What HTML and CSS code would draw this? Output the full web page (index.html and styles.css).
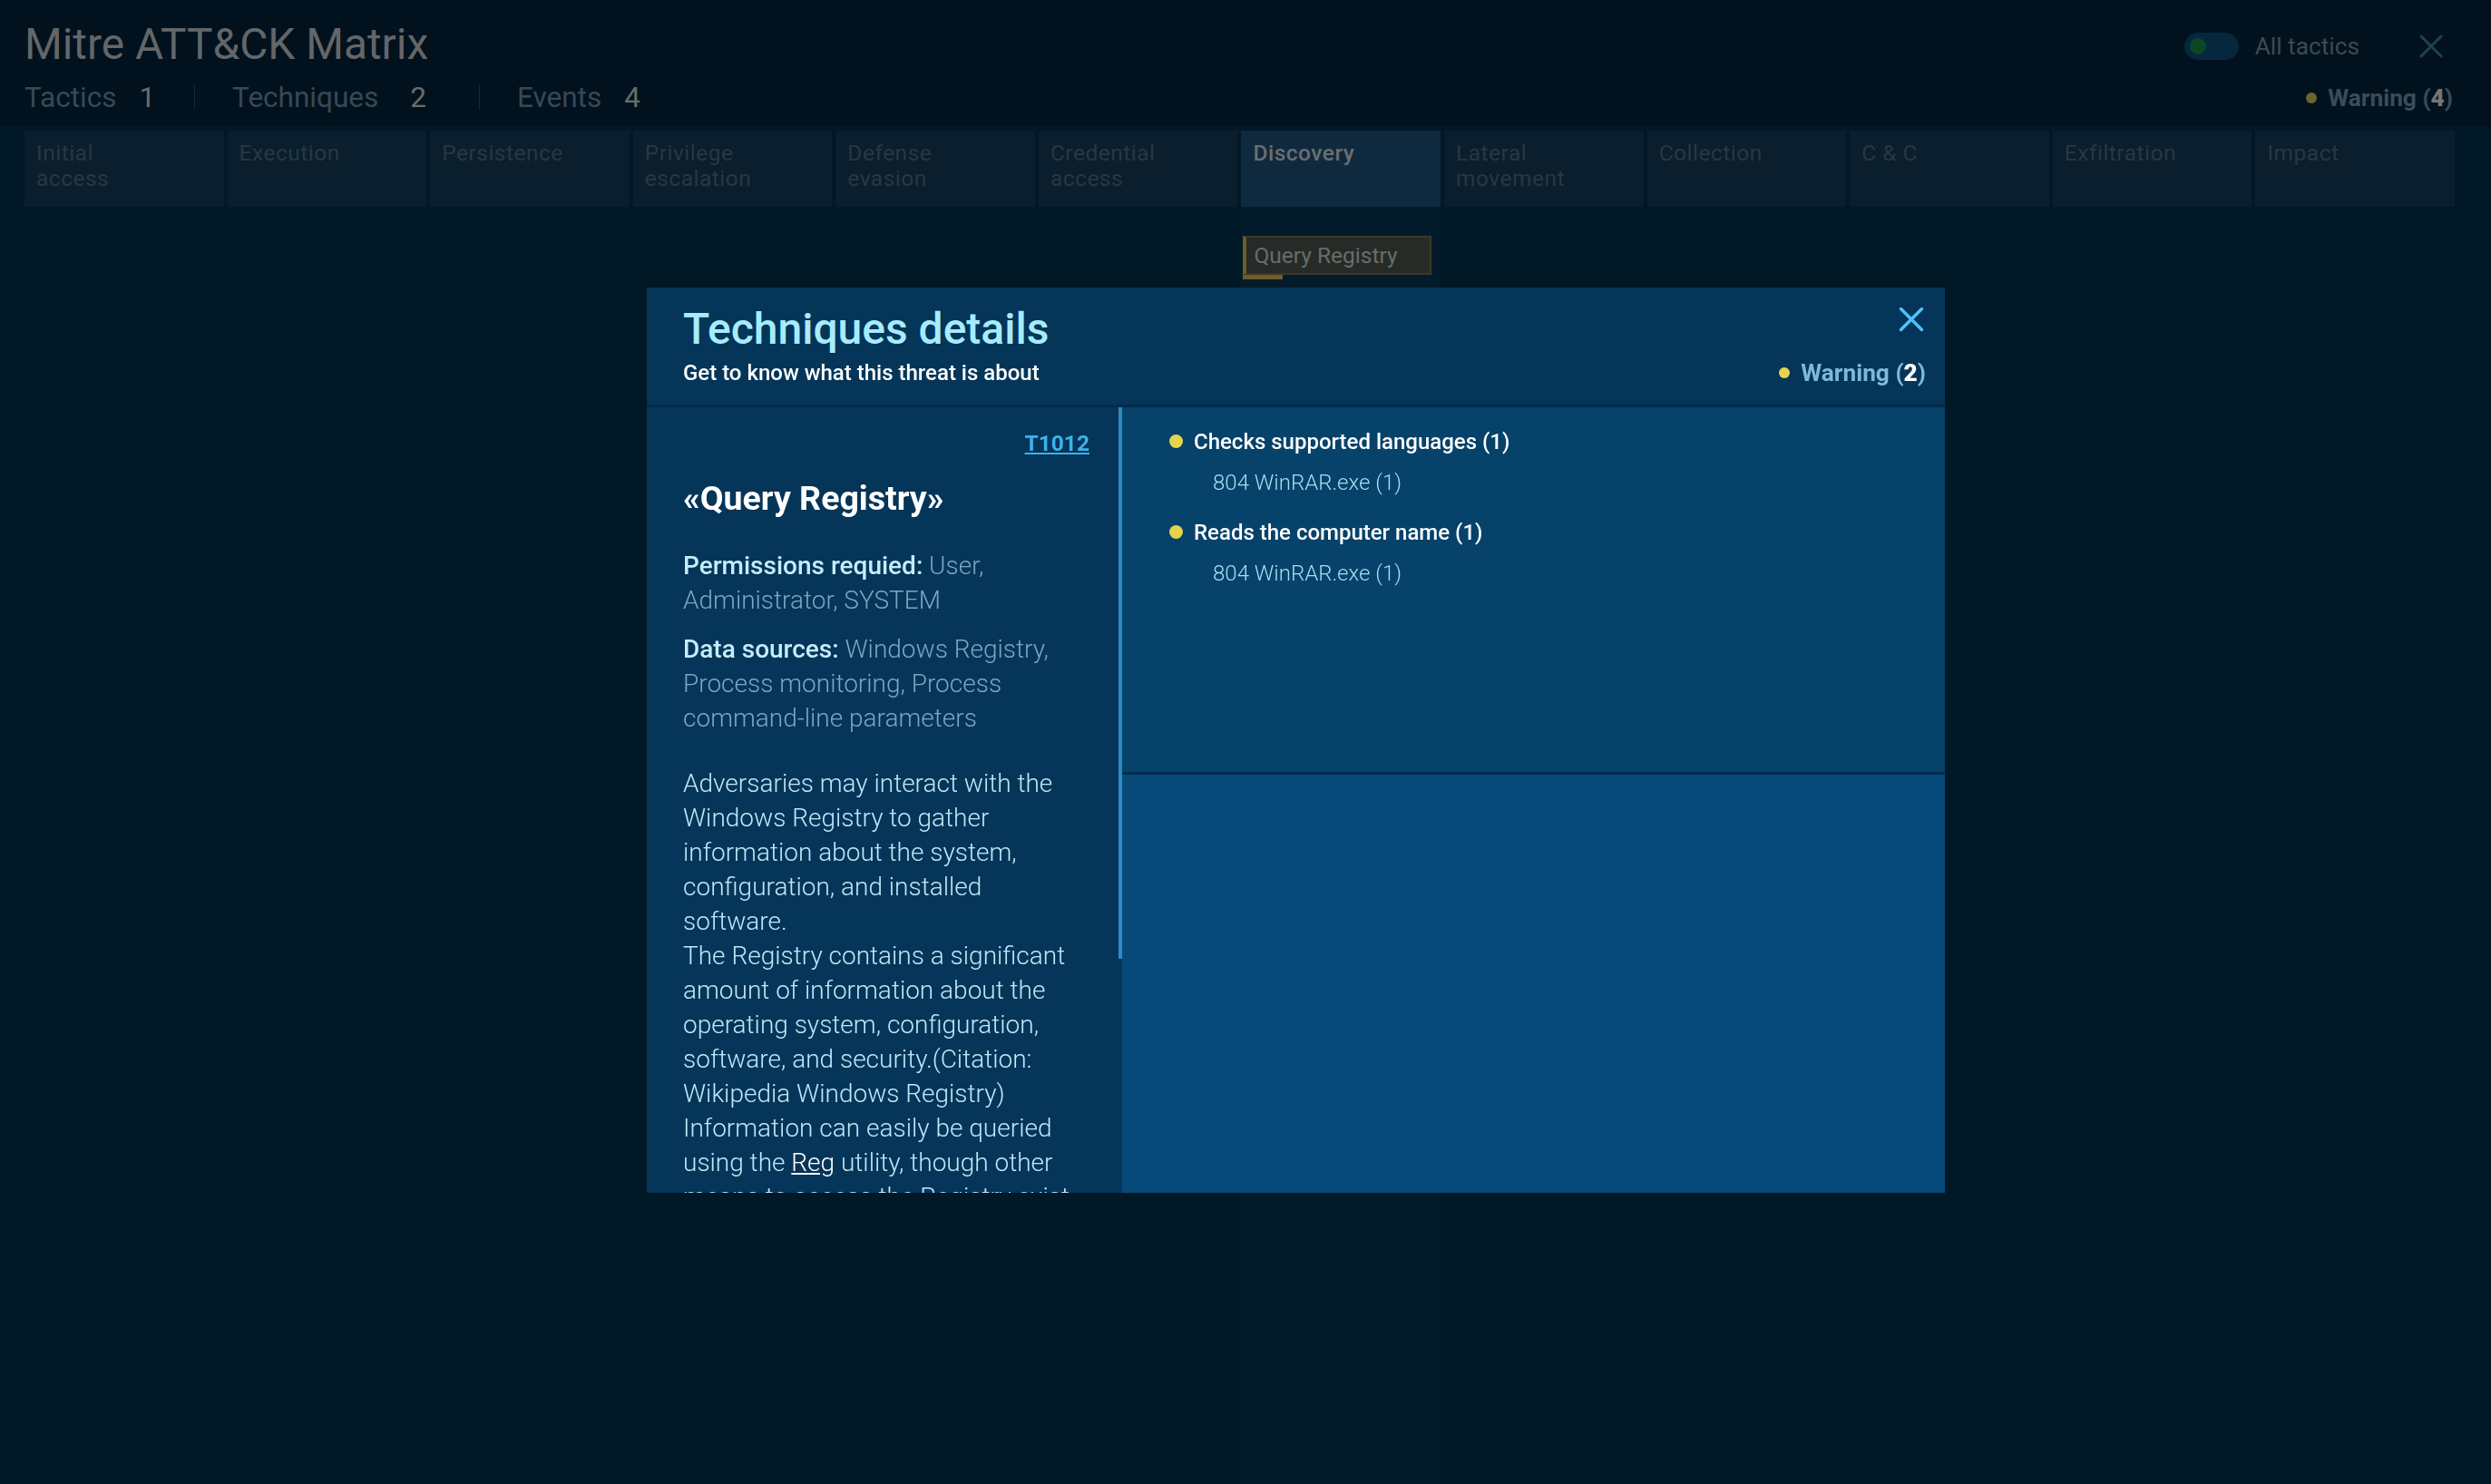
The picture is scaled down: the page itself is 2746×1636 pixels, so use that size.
FILE: index.html
```html
<!DOCTYPE html>
<html lang="en">
<head>
<meta charset="utf-8">
<title>Mitre ATT&amp;CK Matrix</title>
<link rel="stylesheet" href="styles.css">
</head>
<body>
<div class="page">
  <header class="top">
    <div class="top-row">
      <h1 class="title">Mitre ATT&amp;CK Matrix</h1>
      <div class="top-actions">
        <span class="toggle"><span class="knob"></span></span>
        <span class="toggle-label">All tactics</span>
        <svg class="close-icon" viewBox="0 0 26 26" aria-hidden="true"><path d="M2 2 L24 24 M24 2 L2 24"/></svg>
      </div>
    </div>
    <div class="stats-row">
      <div class="stats">
        <span class="stat-label">Tactics</span><span class="stat-num">1</span>
        <span class="sep"></span>
        <span class="stat-label">Techniques</span><span class="stat-num stat-num--wide">2</span>
        <span class="sep sep--wide"></span>
        <span class="stat-label">Events</span><span class="stat-num">4</span>
      </div>
      <div class="warn"><span class="dot"></span>Warning (<b>4</b>)</div>
    </div>
  </header>

  <main class="matrix">
    <section class="tactic"><div class="tactic-head">Initial<br>access</div><div class="tactic-body"></div></section>
    <section class="tactic"><div class="tactic-head">Execution</div><div class="tactic-body"></div></section>
    <section class="tactic"><div class="tactic-head">Persistence</div><div class="tactic-body"></div></section>
    <section class="tactic"><div class="tactic-head">Privilege<br>escalation</div><div class="tactic-body"></div></section>
    <section class="tactic"><div class="tactic-head">Defense<br>evasion</div><div class="tactic-body"></div></section>
    <section class="tactic"><div class="tactic-head">Credential<br>access</div><div class="tactic-body"></div></section>
    <section class="tactic active"><div class="tactic-head">Discovery</div><div class="tactic-body"><div class="chip">Query Registry</div></div></section>
    <section class="tactic"><div class="tactic-head">Lateral<br>movement</div><div class="tactic-body"></div></section>
    <section class="tactic"><div class="tactic-head">Collection</div><div class="tactic-body"></div></section>
    <section class="tactic"><div class="tactic-head">C &amp; C</div><div class="tactic-body"></div></section>
    <section class="tactic"><div class="tactic-head">Exfiltration</div><div class="tactic-body"></div></section>
    <section class="tactic"><div class="tactic-head">Impact</div><div class="tactic-body"></div></section>
  </main>
</div>

<div class="overlay">
  <div class="modal">
    <div class="modal-head">
      <div class="mh-row1">
        <h2 class="mh-title">Techniques details</h2>
        <svg class="mh-close" viewBox="0 0 28 28" aria-hidden="true"><path d="M2.5 2.5 L25.5 25.5 M25.5 2.5 L2.5 25.5"/></svg>
      </div>
      <div class="mh-row2">
        <div class="mh-sub">Get to know what this threat is about</div>
        <div class="mh-warn"><span class="dot"></span>Warning (<b>2</b>)</div>
      </div>
    </div>
    <div class="modal-body">
      <div class="detail">
        <div class="tech-id"><a href="#">T1012</a></div>
        <h3 class="tech-name">«Query Registry»</h3>
        <p class="meta"><span class="meta-label">Permissions requied:</span> User, Administrator, SYSTEM</p>
        <p class="meta"><span class="meta-label">Data sources:</span> Windows Registry, Process monitoring, Process command-line parameters</p>
        <p class="desc">Adversaries may interact with the Windows Registry to gather information about the system, configuration, and installed software.<br>The Registry contains a significant amount of information about the operating system, configuration, software, and security.(Citation: Wikipedia Windows Registry) Information can easily be queried using the <a href="#">Reg</a> utility, though other means to access the Registry exist. Some of the information may help adversaries to further their operation within a network. Adversaries may use the information from Query Registry during automated discovery to shape follow-on behaviors, including whether or not the adversary fully infects the target and/or attempts specific actions.</p>
        <div class="thumb"></div>
      </div>
      <div class="events">
        <div class="events-list">
          <div class="ev">
            <div class="ev-title"><span class="ev-dot"></span>Checks supported languages (1)</div>
            <div class="ev-sub">804 WinRAR.exe (1)</div>
          </div>
          <div class="ev">
            <div class="ev-title"><span class="ev-dot"></span>Reads the computer name (1)</div>
            <div class="ev-sub">804 WinRAR.exe (1)</div>
          </div>
        </div>
        <div class="events-detail"></div>
      </div>
    </div>
  </div>
</div>
</body>
</html>
```

FILE: styles.css
```css
html, body {
  margin: 0;
  padding: 0;
  height: 100%;
  overflow: hidden;
}
body {
  font-family: Roboto, "Noto Sans", "Liberation Sans", sans-serif;
  background: #011826;
}

.page {
  display: flex;
  flex-direction: column;
  height: 100vh;
}

/* ---------- top header ---------- */
.top {
  background: #01121e;
  padding: 21px 40px 12px 27px;
}
.top-row {
  display: flex;
  justify-content: space-between;
  align-items: center;
  height: 56px;
}
.title {
  margin: 0;
  font-size: 47.8px;
  font-weight: 400;
  line-height: 56px;
  color: #646668;
}
.top-actions {
  display: flex;
  align-items: center;
  padding-top: 4px;
}
.toggle {
  display: flex;
  align-items: center;
  width: 60px;
  height: 30px;
  border-radius: 15px;
  background: #05283f;
}
.knob {
  width: 18px;
  height: 18px;
  border-radius: 50%;
  background: #0d4625;
  margin-left: 6px;
}
.toggle-label {
  margin-left: 18px;
  font-size: 26.25px;
  line-height: 30px;
  color: #3e4953;
}
.close-icon {
  width: 26px;
  height: 26px;
  margin-left: 66px;
  margin-right: 13px;
  fill: none;
  stroke: #1d4256;
  stroke-width: 3;
  stroke-linecap: round;
}

.stats-row {
  display: flex;
  justify-content: space-between;
  align-items: center;
  margin-top: 10.6px;
  height: 40px;
}
.stats {
  display: flex;
  align-items: center;
  font-size: 31.5px;
  line-height: 40px;
}
.stat-label { color: #374856; }
.stat-num {
  color: #6b6b6b;
  margin-left: 25px;
}
.stat-num--wide { margin-left: 35px; }
.sep {
  width: 1px;
  height: 27px;
  background: #172733;
  margin: 0 41px 0 43px;
}
.sep--wide { margin-left: 58px; }

.warn {
  display: flex;
  align-items: center;
  font-size: 26.25px;
  font-weight: 700;
  line-height: 32px;
  color: #3a4c5a;
  margin-right: 2px;
}
.warn .dot {
  width: 12px;
  height: 12px;
  border-radius: 50%;
  background: #6d6430;
  margin-right: 12px;
}
.warn b { color: #767676; }

/* ---------- matrix ---------- */
.matrix {
  flex: 1;
  display: grid;
  grid-template-columns: repeat(12, 1fr);
  gap: 4px;
  padding: 4px 40px 0 27px;
  min-height: 0;
}
.tactic {
  display: flex;
  flex-direction: column;
  min-width: 0;
}
.tactic-head {
  height: 84px;
  box-sizing: border-box;
  padding: 11px 13px;
  background: #0a1e2d;
  color: #283742;
  font-size: 24.5px;
  line-height: 28px;
  letter-spacing: 0.5px;
}
.tactic-body { flex: 1; }
.tactic.active .tactic-head {
  background: #0f2a3f;
  color: #6c6e70;
  font-weight: 500;
}
.tactic.active .tactic-body { background: #031b2a; }

.chip {
  position: relative;
  margin: 32px 10px 0 2px;
  height: 43px;
  box-sizing: border-box;
  background: #262b27;
  border: 2px solid #3c3925;
  border-left: 4px solid #6e5c2b;
  padding-left: 8px;
  font-size: 24.5px;
  line-height: 39px;
  color: #6b6b6b;
  white-space: nowrap;
}
.chip::after {
  content: "";
  position: absolute;
  left: -4px;
  bottom: -7px;
  width: 44px;
  height: 5px;
  background: #6e5c2b;
}

/* ---------- modal ---------- */
.overlay {
  position: fixed;
  inset: 0;
}
.modal {
  position: absolute;
  left: 713px;
  top: 317px;
  width: 1431px;
  height: 998px;
  display: flex;
  flex-direction: column;
}
.modal-head {
  background: #053558;
  padding: 18px 23px 19px 40px;
  border-bottom: 3px solid #032a47;
}
.mh-row1 {
  display: flex;
  justify-content: space-between;
}
.mh-title {
  margin: 0;
  font-size: 48px;
  font-weight: 500;
  line-height: 56px;
  color: #a6ecfb;
}
.mh-close {
  width: 28px;
  height: 28px;
  margin-top: 3px;
  fill: none;
  stroke: #4fc3f7;
  stroke-width: 3.5;
  stroke-linecap: round;
}
.mh-row2 {
  display: flex;
  justify-content: space-between;
  align-items: center;
  margin-top: 4px;
  height: 32px;
}
.mh-sub {
  font-size: 24px;
  font-weight: 500;
  line-height: 32px;
  color: #ffffff;
}
.mh-warn {
  display: flex;
  align-items: center;
  font-size: 26.25px;
  font-weight: 700;
  line-height: 32px;
  color: #7db9dc;
  margin-right: -2px;
}
.mh-warn .dot {
  width: 12px;
  height: 12px;
  border-radius: 50%;
  background: #e8d44b;
  margin-right: 12px;
}
.mh-warn b { color: #ffffff; }

.modal-body {
  flex: 1;
  display: flex;
  min-height: 0;
}
.detail {
  position: relative;
  width: 524px;
  flex: none;
  box-sizing: border-box;
  background: #053558;
  overflow: hidden;
  padding: 24.6px 36px 0 40px;
}
.thumb {
  position: absolute;
  top: 0;
  right: 0;
  width: 4px;
  height: 608px;
  background: #2f8ac3;
}
.tech-id {
  text-align: right;
  font-size: 24.5px;
  font-weight: 700;
  line-height: 30px;
}
.tech-id a {
  color: #3db2ea;
  text-decoration: underline;
}
.tech-name {
  margin: 23px 0 0;
  font-size: 37.5px;
  font-weight: 700;
  line-height: 44px;
  color: #ffffff;
}
.meta {
  margin: 34px 0 0;
  font-size: 28px;
  font-weight: 300;
  line-height: 38px;
  color: #7da5c3;
}
.meta + .meta { margin-top: 16px; }
.meta-label {
  font-weight: 500;
  color: #c5ecfb;
}
.desc {
  margin: 34px 0 0;
  padding-right: 8px;
  font-size: 28px;
  font-weight: 300;
  line-height: 38px;
  color: #c0e6f8;
}
.desc a {
  color: #ffffff;
  text-decoration: underline;
}

.events {
  flex: 1;
  display: flex;
  flex-direction: column;
}
.events-list {
  height: 405px;
  box-sizing: border-box;
  background: #06426a;
  border-bottom: 3px solid #032d4c;
  padding: 22.6px 0 0 52px;
}
.events-detail {
  flex: 1;
  background: #074a79;
}
.ev + .ev { margin-top: 25px; }
.ev-title {
  display: flex;
  align-items: center;
  font-size: 24px;
  font-weight: 500;
  line-height: 30px;
  color: #ffffff;
}
.ev-dot {
  flex: none;
  width: 15px;
  height: 15px;
  border-radius: 50%;
  background: #e6d44e;
  margin-right: 12px;
}
.ev-sub {
  margin: 15px 0 0 48px;
  font-size: 24px;
  font-weight: 300;
  line-height: 30px;
  color: #a7dcf3;
}
```
